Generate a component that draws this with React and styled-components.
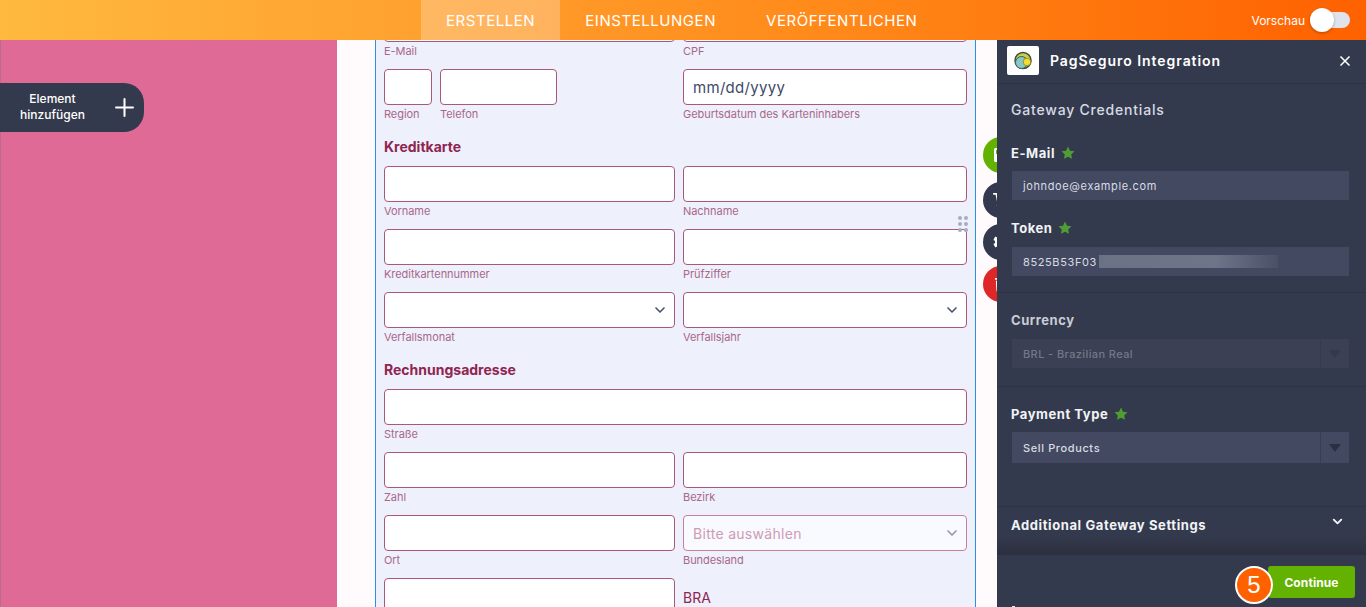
import React from "react";
import styled, { createGlobalStyle } from "styled-components";
import { ChevronDown, Plus, X } from "lucide-react";
import { FaSave, FaShoppingCart, FaCog, FaTrash } from "react-icons/fa";

const GlobalStyle = createGlobalStyle`
  html, body { margin: 0; padding: 0; height: 100%; overflow: hidden; }
  body { font-family: Inter, "Liberation Sans", sans-serif; }
  * { box-sizing: border-box; }
`;

const Page = styled.div`
  width: 1366px;
  height: 607px;
  display: flex;
  flex-direction: column;
  overflow: hidden;
`;

const TopBar = styled.header`
  height: 40px;
  flex: none;
  display: flex;
  align-items: stretch;
  padding-left: 421px;
  background: linear-gradient(90deg, #ffb93f 0%, #ff9f2d 33%, #ff8a1a 60%, #ff6100 100%);
  position: relative;
  z-index: 3;
`;

const Tab = styled.div`
  display: flex;
  align-items: center;
  padding: 0 25px;
  color: #fff;
  font-size: 15px;
  letter-spacing: 0.55px;
  background: ${(p) => (p.$active ? "rgba(255,255,255,0.25)" : "transparent")};
`;

const PreviewWrap = styled.div`
  margin-left: auto;
  padding-right: 16px;
  display: flex;
  align-items: center;
  gap: 5px;
  color: #fff;
  font-size: 12px;
`;

const Track = styled.div`
  width: 40px;
  height: 16px;
  border-radius: 8px;
  background: #e0e3ec;
  display: flex;
  align-items: center;
`;

const Thumb = styled.div`
  width: 24px;
  height: 24px;
  border-radius: 50%;
  background: #fff;
  box-shadow: 0 1px 3px rgba(0, 0, 0, 0.3);
`;

const Body = styled.main`
  flex: 1;
  display: flex;
  min-height: 0;
  position: relative;
`;

const PinkSide = styled.aside`
  width: 337px;
  flex: none;
  background: #df6a96;
  border-left: 1px solid #b96d8d;
  padding-top: 43px;
`;

const AddPill = styled.div`
  width: 144px;
  height: 49px;
  margin-left: -1px;
  background: #343a4d;
  border-radius: 0 20px 20px 0;
  display: flex;
  align-items: center;
  color: #fff;
  svg { margin-left: 5px; }
`;

const AddText = styled.div`
  width: 105px;
  margin-top: -2px;
  text-align: center;
  font-size: 12px;
  font-weight: 500;
  line-height: 16px;
`;

const Canvas = styled.div`
  width: 660px;
  flex: none;
  background: #fffbfd;
  padding-left: 38px;
  overflow: hidden;
`;

const Form = styled.div`
  width: 601px;
  margin-top: -34px;
  padding: 0 8px;
  background: #eef0fc;
  border-left: 1px solid #2d8fe0;
  border-right: 1px solid #2d8fe0;
  display: flex;
  flex-direction: column;
  height: 700px;
`;

const Row = styled.div`
  display: grid;
  grid-template-columns: ${(p) => p.$cols || "291px 284px"};
  column-gap: 8px;
  margin-bottom: 9px;
`;

const Split = styled.div`
  display: grid;
  grid-template-columns: 48px 117px;
  column-gap: 8px;
`;

const Heading = styled.h3`
  margin: 0;
  height: 34px;
  padding-top: 6px;
  font-size: 14px;
  line-height: 18px;
  font-weight: 700;
  color: #8f2550;
`;

const Box = styled.div`
  height: 36px;
  background: ${(p) => (p.$faded ? "#f9faff" : "#fff")};
  border: 1px solid ${(p) => (p.$faded ? "#c77f9c" : "#a9587c")};
  border-radius: 4px;
  display: flex;
  align-items: center;
  justify-content: space-between;
  padding: 0 6px 0 9px;
  font-size: ${(p) => (p.$faded ? 14 : 15)}px;
  letter-spacing: 0.3px;
  color: ${(p) => (p.$faded ? "#cf9bb3" : "#3e4a66")};
  svg { color: ${(p) => (p.$faded ? "#8f97ad" : "#4a5570")}; }
`;

const Caption = styled.div`
  height: 18px;
  font-size: 11px;
  line-height: 18px;
  letter-spacing: -0.05px;
  color: #a8688a;
`;

const PlainValue = styled.div`
  height: 36px;
  padding-top: 11px;
  font-size: 14px;
  line-height: 18px;
  color: #8f2550;
`;

const DragDots = styled.div`
  position: absolute;
  left: 958px;
  top: 176px;
  display: grid;
  grid-template-columns: 4px 4px;
  gap: 2px;
  z-index: 1;
`;

const Dot = styled.span`
  width: 4px;
  height: 4px;
  border-radius: 50%;
  background: #a7adc0;
`;

const SideActions = styled.div`
  position: absolute;
  left: 983px;
  top: 97px;
  display: flex;
  flex-direction: column;
  gap: 6px;
  z-index: 1;
`;

const RoundAction = styled.div`
  width: 36px;
  height: 36px;
  margin-bottom: ${(p) => p.$shift || 0}px;
  border-radius: 50%;
  background: ${(p) => p.$bg};
  color: #fff;
  display: flex;
  align-items: center;
  justify-content: center;
`;

const Panel = styled.section`
  width: 369px;
  flex: none;
  background: #343a4d;
  color: #fff;
  display: flex;
  flex-direction: column;
  position: relative;
  z-index: 2;
`;

const PanelHead = styled.div`
  height: 44px;
  flex: none;
  display: flex;
  align-items: center;
  padding: 0 13px 2px 10px;
  border-bottom: 1px solid #2e3344;
`;

const LogoBox = styled.div`
  width: 32px;
  height: 29px;
  background: #fff;
  border-radius: 2px;
  display: flex;
  align-items: center;
  justify-content: center;
  margin-right: 11px;
`;

const PanelTitle = styled.div`
  flex: 1;
  font-size: 14px;
  font-weight: 600;
  letter-spacing: 0.95px;
`;

const PanelSection = styled.div`
  padding: ${(p) => p.$top}px 17px 0 14px;
  height: ${(p) => p.$h}px;
  flex: none;
  border-bottom: ${(p) => (p.$line ? "1px solid #2e3344" : "none")};
`;

const SubTitle = styled.div`
  font-size: 14px;
  line-height: 16px;
  font-weight: 500;
  color: #d8dbe4;
  letter-spacing: 0.8px;
  margin-bottom: 27px;
`;

const FieldLabel = styled.div`
  display: flex;
  align-items: center;
  gap: 6px;
  height: 16px;
  font-size: 13px;
  font-weight: 700;
  letter-spacing: 0.55px;
  color: ${(p) => (p.$dim ? "#c9ccd6" : "#f2f3f6")};
  margin-bottom: ${(p) => p.$mb || 10}px;
`;

const DarkInput = styled.div`
  width: 337px;
  height: ${(p) => p.$h || 29}px;
  margin-left: 1px;
  background: ${(p) => (p.$dim ? "#3b4054" : "#434960")};
  color: ${(p) => (p.$dim ? "#737889" : "#d9dce5")};
  font-size: 11px;
  letter-spacing: ${(p) => (p.$dim ? 0.4 : 0.62)}px;
  font-weight: ${(p) => (p.$bold ? 500 : 400)};
  display: flex;
  align-items: center;
  padding-left: 11px;
  margin-bottom: ${(p) => p.$mb || 0}px;
`;

const Blurred = styled.span`
  width: 179px;
  height: 13px;
  margin-left: 2px;
  background: linear-gradient(90deg, #6c7286 0%, #6f7589 65%, #4a5066 100%);
`;

const Caret = styled.div`
  margin-left: auto;
  width: 29px;
  align-self: stretch;
  border-left: 1px solid ${(p) => (p.$dim ? "#363b4e" : "#383d52")};
  display: flex;
  align-items: center;
  justify-content: center;
  &::after {
    content: "";
    border-left: 6px solid transparent;
    border-right: 6px solid transparent;
    border-top: 8px solid ${(p) => (p.$dim ? "#343a4d" : "#2b3040")};
  }
`;

const Collapse = styled.div`
  height: 49px;
  flex: none;
  padding: 10px 21px 0 14px;
  display: flex;
  justify-content: space-between;
  align-items: flex-start;
  font-size: 13px;
  font-weight: 700;
  letter-spacing: 0.6px;
  line-height: 16px;
  color: #f2f3f6;
  background: linear-gradient(180deg, #343a4d 0%, #343a4d 60%, #2b2f3f 100%);
  border-top: 1px solid #2e3344;
  svg { margin-top: -3px; }
`;

const PanelFoot = styled.div`
  flex: 1;
  display: flex;
  justify-content: flex-end;
  padding: 11px 11px 0 0;
  position: relative;
  &::after {
    content: "";
    position: absolute;
    left: 15px;
    bottom: 0;
    width: 3px;
    height: 1px;
    background: #e8eaf0;
  }
`;

const ContinueBtn = styled.div`
  width: 87px;
  height: 32px;
  background: #63b100;
  border-radius: 3px;
  color: #fff;
  font-size: 12px;
  font-weight: 700;
  letter-spacing: 0.1px;
  display: flex;
  align-items: center;
  justify-content: center;
`;

const StepBadge = styled.div`
  position: absolute;
  left: 238px;
  top: 526px;
  width: 38px;
  height: 38px;
  border-radius: 50%;
  background: #ff6100;
  border: 2px solid #fff;
  color: #fff;
  font-size: 24px;
  display: flex;
  align-items: center;
  justify-content: center;
  font-family: "Liberation Sans", sans-serif;
`;

const Field = ({ label, children, faded }) => (
  <div>
    <Box $faded={faded}>{children}</Box>
    <Caption>{label}</Caption>
  </div>
);

const Star = () => (
  <svg width="14" height="14" viewBox="0 0 24 24" fill="#4f9e33">
    <path d="M12 1l3.4 7 7.6 1-5.500 5.400 1.400 7.600-6.900-3.700-6.900 3.700 1.400-7.600L1 9l7.600-1z" />
  </svg>
);

const PagLogo = () => (
  <svg width="20" height="20" viewBox="0 0 20 20">
    <circle cx="10" cy="9.500" r="8" fill="#c9cf4a" stroke="#3e4a38" strokeWidth="1.500" />
    <circle cx="8.500" cy="11.500" r="6" fill="#86c9c6" stroke="#3c5a58" strokeWidth="1" />
    <circle cx="14" cy="11" r="3.800" fill="#f6dc2e" stroke="#6e6a22" strokeWidth="0.600" />
  </svg>
);

export default function App() {
  return (
    <Page>
      <GlobalStyle />
      <TopBar>
        <Tab $active>ERSTELLEN</Tab>
        <Tab>EINSTELLUNGEN</Tab>
        <Tab>VERÖFFENTLICHEN</Tab>
        <PreviewWrap>
          Vorschau
          <Track>
            <Thumb />
          </Track>
        </PreviewWrap>
      </TopBar>
      <Body>
        <PinkSide>
          <AddPill>
            <AddText>
              Element
              <br />
              hinzufügen
            </AddText>
            <Plus size={29} strokeWidth={1.700} />
          </AddPill>
        </PinkSide>
        <Canvas>
          <Form>
            <Row>
              <Field label="E-Mail" />
              <Field label="CPF" />
            </Row>
            <Row>
              <Split>
                <Field label="Region" />
                <Field label="Telefon" />
              </Split>
              <Field label="Geburtsdatum des Karteninhabers">mm/dd/yyyy</Field>
            </Row>
            <Heading>Kreditkarte</Heading>
            <Row>
              <Field label="Vorname" />
              <Field label="Nachname" />
            </Row>
            <Row>
              <Field label="Kreditkartennummer" />
              <Field label="Prüfziffer" />
            </Row>
            <Row>
              <Field label="Verfallsmonat">
                <span />
                <ChevronDown size={16} strokeWidth={2.500} />
              </Field>
              <Field label="Verfallsjahr">
                <span />
                <ChevronDown size={16} strokeWidth={2.500} />
              </Field>
            </Row>
            <Heading>Rechnungsadresse</Heading>
            <Row $cols="583px">
              <Field label="Straße" />
            </Row>
            <Row>
              <Field label="Zahl" />
              <Field label="Bezirk" />
            </Row>
            <Row>
              <Field label="Ort" />
              <Field label="Bundesland" faded>
                Bitte auswählen
                <ChevronDown size={16} strokeWidth={2.500} />
              </Field>
            </Row>
            <Row>
              <Field />
              <PlainValue>BRA</PlainValue>
            </Row>
          </Form>
        </Canvas>
        <DragDots>
          {[0, 1, 2, 3, 4, 5].map((i) => (
            <Dot key={i} />
          ))}
        </DragDots>
        <SideActions>
          <RoundAction $bg="#63b100" $shift={3}>
            <FaSave size={16} />
          </RoundAction>
          <RoundAction $bg="#343a4d">
            <FaShoppingCart size={16} />
          </RoundAction>
          <RoundAction $bg="#343a4d">
            <FaCog size={16} />
          </RoundAction>
          <RoundAction $bg="#e02727">
            <FaTrash size={15} />
          </RoundAction>
        </SideActions>
        <Panel>
          <PanelHead>
            <LogoBox>
              <PagLogo />
            </LogoBox>
            <PanelTitle>PagSeguro Integration</PanelTitle>
            <X size={16} strokeWidth={2.500} />
          </PanelHead>
          <PanelSection $h={209} $line $top={18}>
            <SubTitle>Gateway Credentials</SubTitle>
            <FieldLabel>
              E-Mail <Star />
            </FieldLabel>
            <DarkInput $mb={20}>johndoe@example.com</DarkInput>
            <FieldLabel $mb={11}>
              Token <Star />
            </FieldLabel>
            <DarkInput>
              8525B53F03
              <Blurred />
            </DarkInput>
          </PanelSection>
          <PanelSection $h={94} $line $top={19}>
            <FieldLabel $dim $mb={11}>Currency</FieldLabel>
            <DarkInput $dim $bold>
              BRL - Brazilian Real
              <Caret $dim />
            </DarkInput>
          </PanelSection>
          <PanelSection $h={119} $top={19}>
            <FieldLabel>
              Payment Type <Star />
            </FieldLabel>
            <DarkInput $h={31} $bold>
              Sell Products
              <Caret />
            </DarkInput>
          </PanelSection>
          <Collapse>
            Additional Gateway Settings
            <ChevronDown size={15} strokeWidth={3} />
          </Collapse>
          <PanelFoot>
            <ContinueBtn>Continue</ContinueBtn>
          </PanelFoot>
          <StepBadge>5</StepBadge>
        </Panel>
      </Body>
    </Page>
  );
}
